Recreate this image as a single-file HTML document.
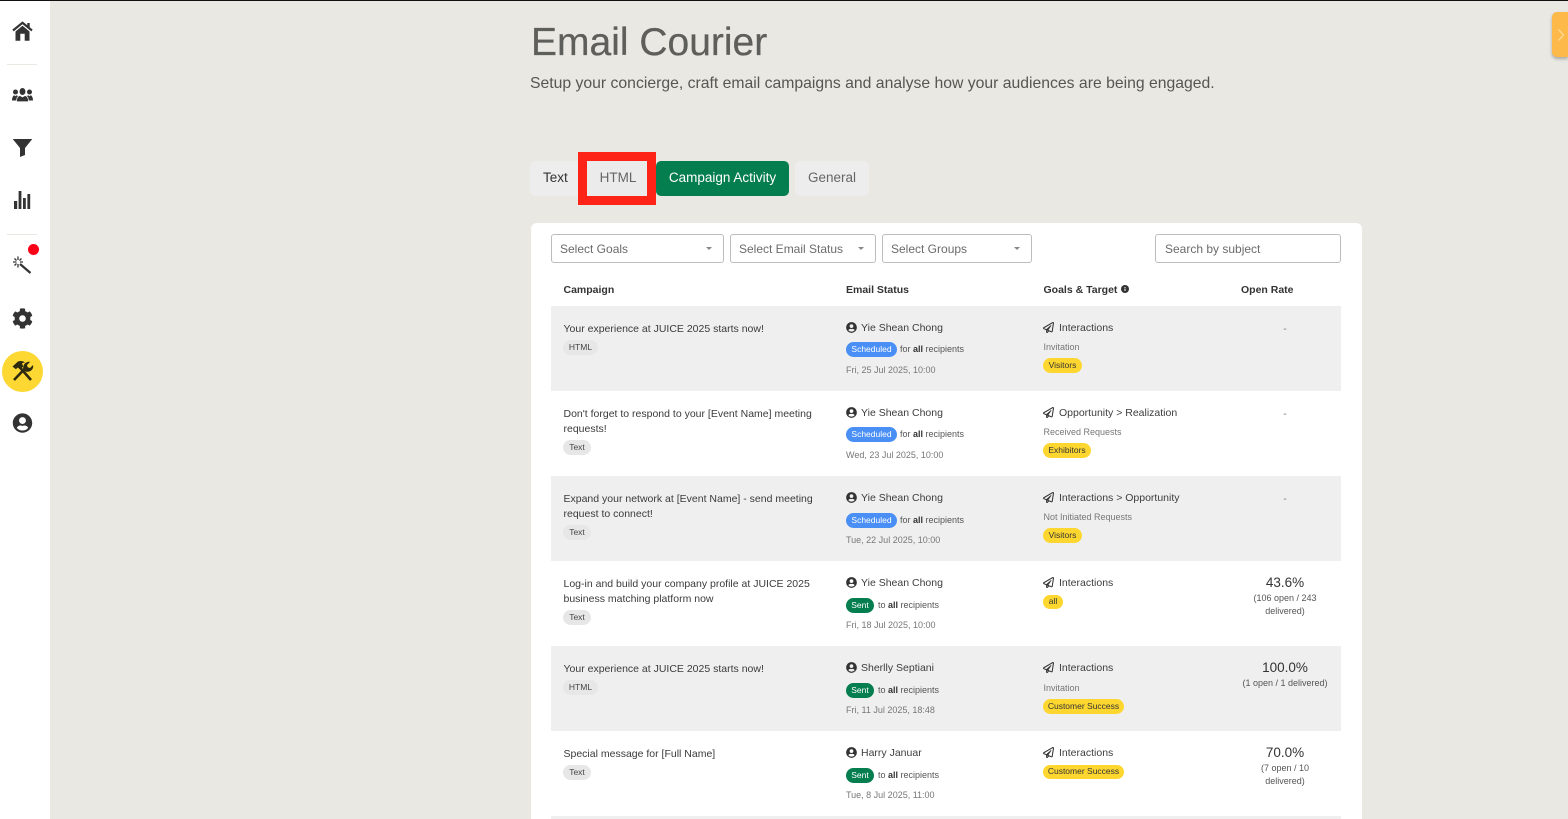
<!DOCTYPE html>
<html lang="en">
<head>
<meta charset="utf-8">
<title>Email Courier</title>
<style>
*{box-sizing:border-box}
html{margin:0;padding:0;width:1568px;height:819px;overflow:hidden}
body{margin:0;padding:0;width:1568px;height:819px;overflow:hidden;position:relative;background:#e9e8e3;font-family:"Liberation Sans",sans-serif;color:#333}
.a{position:absolute}
.t{position:absolute;white-space:nowrap;line-height:16px}
#topline{left:0;top:0;width:1568px;height:1px;background:#111;z-index:9}
#side{left:0;top:0;width:50px;height:819px;background:#fff}
.sep{position:absolute;left:7px;width:30px;height:1px;background:#e9e8e3}
.ic{position:absolute;fill:#333}
h1{position:absolute;margin:0;left:531px;top:20px;font-size:39px;line-height:45px;font-weight:400;color:#5e5e5a;-webkit-text-stroke:.25px #5e5e5a}
.subt{left:530px;top:74px;font-size:15.75px;line-height:20px;color:#565652}
.tab{position:absolute;top:161px;height:35px;line-height:33px;font-size:13.5px;text-align:center;background:#ededed;border-radius:5px;color:#666}
#card{left:531px;top:223px;width:831px;height:596px;background:#fff;border-radius:6px 6px 0 0}
.sel{position:absolute;top:234px;height:29px;background:#fff;border:1px solid #bdbdbd;border-radius:3px;font-size:12px;line-height:28px;color:#6b6b6b;padding-left:8px}
.sel i{position:absolute;right:11px;top:12px;width:0;height:0;border-left:3.5px solid transparent;border-right:3.5px solid transparent;border-top:3.5px solid #888}
.h{font-size:10.5px;font-weight:700;color:#333;top:282px}
.row{position:absolute;left:551px;width:790px;height:85px}
.g{background:#efefef}
.row .t{font-size:10.5px}
.c1{left:12.5px;color:#3b3b3b;line-height:15px!important;width:265px;white-space:normal!important}
.tag{position:absolute;left:12px;height:15px;border-radius:8px;background:#e7e7e7;font-size:8.5px;line-height:14px;text-align:center;color:#444}
.u{position:absolute;left:295px;top:16px;width:11px;height:11px;fill:#333}
.p{position:absolute;left:492px;top:16px;width:11px;height:11px;fill:#333}
.n{left:310px;top:14px;color:#3d3d3d}
.b{position:absolute;left:295px;height:15px;border-radius:8px;color:#fff;font-size:8.5px;line-height:14px;text-align:center}
.s{background:#4a8ff5;width:51px}
.d{background:#047d4f;width:28px}
.r{color:#555;font-size:9px!important}
.r b{color:#333}
.dt{left:295px;font-size:9px!important;color:#777}
.go{left:508px;top:14px;color:#3d3d3d}
.su{left:492.5px;top:33px;font-size:9px!important;color:#777}
.y{position:absolute;left:492px;height:15px;border-radius:8px;background:#fdd72f;color:#333;font-size:8.5px;line-height:14px;text-align:center}
.pc{left:664px;width:140px;text-align:center;top:14px;font-size:13.5px!important;color:#333}
.ps{position:absolute;left:694px;width:80px;text-align:center;top:31px;font-size:9px;line-height:13px;color:#555}
.ps.w{left:664px;width:140px}
.da{left:664px;width:140px;text-align:center;top:15px;color:#777}
</style>
</head>
<body>
<svg width="0" height="0" style="position:absolute">
<defs>
<symbol id="user" viewBox="0 0 512 512"><path d="M256 8C119 8 8 119 8 256s111 248 248 248 248-111 248-248S393 8 256 8zm0 96c48.6 0 88 39.4 88 88s-39.4 88-88 88-88-39.4-88-88 39.4-88 88-88zm0 344c-58.7 0-111.3-26.6-146.5-68.2 18.8-35.4 55.6-59.8 98.5-59.8 2.4 0 4.8.4 7.1 1.1 13 4.2 26.6 6.9 40.9 6.9 14.3 0 28-2.7 40.9-6.9 2.3-.7 4.7-1.1 7.1-1.1 42.9 0 79.7 24.4 98.5 59.8C367.3 421.4 314.7 448 256 448z"/></symbol>
<symbol id="plane" viewBox="0 0 512 512"><path d="M440 6.5L24 246.4c-34.4 19.9-31.1 70.8 5.7 85.9L144 379.6V464c0 46.4 59.2 65.5 86.6 28.6l43.8-59.1 111.9 46.2c5.9 2.4 12.1 3.6 18.3 3.6 8.2 0 16.3-2.1 23.6-6.2 12.8-7.2 21.6-20 23.9-34.5l59.4-387.2c6.1-40.1-36.9-68.8-71.5-48.9zM192 464v-64.6l36.6 15.1L192 464zm212.6-28.7l-153.8-63.5L391 169.5c10.7-15.5-9.5-33.5-23.7-21.2L155.8 332.6 48 288 464 48l-59.4 387.3z"/></symbol>
</defs>
</svg>

<div id="topline" class="a"></div>
<div id="side" class="a"></div>
<div class="sep" style="top:64px"></div>
<div class="sep" style="top:234px"></div>

<svg class="a" style="left:0;top:0" width="50" height="60" viewBox="0 0 50 60"><path d="M13 30.5L22.5 22.8L32 30.5" stroke="#333" stroke-width="2.2" fill="none"/><rect x="27.3" y="23" width="2.4" height="5" fill="#333"/><path d="M15.5 31.5L22.5 25.8L29.5 31.5V40.7H24.7V33.8H20.3V40.7H15.5z" fill="#333"/></svg>

<svg class="a" style="left:0;top:80px" width="50" height="30" viewBox="0 0 50 30"><circle cx="15.5" cy="12" r="2.5" fill="#333"/><circle cx="29.5" cy="12" r="2.5" fill="#333"/><path d="M12 20.5c0-3 1.2-4.8 2.3-5.2l1.2 1 1.2-1c1 .4 2.3 1.5 2.3 5.2z" fill="#333"/><path d="M33 20.5c0-3-1.2-4.8-2.3-5.2l-1.2 1-1.2-1c-1 .4-2.3 1.500-2.300 5.200z" fill="#333"/><ellipse cx="22.5" cy="11.5" rx="3.3" ry="3.9" fill="#333" stroke="#fff" stroke-width=".7"/><path d="M16.5 21.7c0-3.700 1.500-5.700 3.300-6.200l2.700 1.500 2.700-1.500c1.800.5 3.300 2.500 3.300 6.200z" fill="#333" stroke="#fff" stroke-width=".7"/></svg>

<svg class="a" style="left:0;top:130px" width="50" height="30" viewBox="0 0 50 30"><path d="M12.7 9H32.3L25 18V25L20 27V18z" fill="#333"/></svg>

<svg class="ic" style="left:14px;top:191px" width="17" height="18" viewBox="0 0 17 18"><rect x="0" y="10" width="3.2" height="8"/><rect x="4.6" y="0" width="2.8" height="18"/><rect x="9" y="7" width="2.8" height="11"/><rect x="13.4" y="3" width="2.8" height="15"/></svg>

<svg class="a" style="left:12px;top:255px" width="20" height="20" viewBox="0 0 20 20"><path d="M8 9L18.5 18" stroke="#333" stroke-width="2.2" fill="none"/><path d="M6 1.5v3.500M6 9v3.500M1 7h3.500M8 7h3M2.500 3.500l2 2M9.500 3.500l-2 2M2.500 10.500l2-2" stroke="#333" stroke-width="1.3" fill="none"/></svg>
<div class="a" style="left:28px;top:244px;width:11px;height:11px;border-radius:50%;background:#fb0017"></div>

<svg class="ic" style="left:12px;top:308px" width="21" height="21" viewBox="0 0 512 512"><path d="M487.4 315.7l-42.6-24.6c4.3-23.2 4.3-47 0-70.2l42.6-24.6c4.9-2.8 7.1-8.6 5.5-14-11.1-35.6-30-67.8-54.7-94.6-3.8-4.1-10-5.1-14.8-2.3L380.8 110c-17.9-15.4-38.5-27.3-60.8-35.1V25.8c0-5.6-3.9-10.5-9.4-11.7-36.7-8.2-74.3-7.8-109.2 0-5.5 1.2-9.4 6.1-9.4 11.7V75c-22.2 7.9-42.8 19.8-60.8 35.1L88.7 85.5c-4.9-2.8-11-1.9-14.8 2.3-24.7 26.7-43.6 58.9-54.7 94.6-1.7 5.4.6 11.2 5.5 14L67.3 221c-4.3 23.2-4.3 47 0 70.2l-42.6 24.6c-4.9 2.8-7.1 8.6-5.5 14 11.1 35.6 30 67.8 54.7 94.6 3.8 4.1 10 5.1 14.8 2.3l42.6-24.6c17.9 15.4 38.5 27.3 60.8 35.1v49.2c0 5.6 3.9 10.5 9.4 11.7 36.7 8.2 74.3 7.8 109.2 0 5.5-1.2 9.4-6.1 9.4-11.7v-49.2c22.2-7.9 42.8-19.8 60.8-35.1l42.6 24.6c4.9 2.8 11 1.9 14.8-2.3 24.7-26.7 43.6-58.9 54.7-94.6 1.5-5.5-.7-11.3-5.6-14.1zM256 336c-44.1 0-80-35.9-80-80s35.9-80 80-80 80 35.9 80 80-35.9 80-80 80z"/></svg>

<div class="a" style="left:2px;top:351px;width:41px;height:41px;border-radius:50%;background:#fdd732"></div>
<svg class="a" style="left:11px;top:360px" width="23" height="22" viewBox="0 0 23 22"><path d="M9 7.5L20 20" stroke="#2e2a10" stroke-width="2.6" fill="none"/><path d="M1.5 6.5L7 1.5c2.5-.8 5-.5 7 .8l-3 1 1.2 3.2-3 3-2.5-2-1.8 1.800z" fill="#2e2a10"/><path d="M3 20L13.5 9" stroke="#2e2a10" stroke-width="2.6" fill="none"/><path d="M12.5 9.5c-1-3 .5-6.5 4-7.5 1-.3 2-.2 2.5 0l-3 3 .7 2.3 2.3.7 3-3c.3 1 .2 2 0 2.8-1 3.2-4.5 4.7-7.5 3.7z" fill="#2e2a10"/></svg>

<svg class="ic" style="left:12px;top:413px" width="21" height="20" viewBox="0 0 512 512"><use href="#user"/></svg>

<h1>Email Courier</h1>
<div class="t subt">Setup your concierge, craft email campaigns and analyse how your audiences are being engaged.</div>

<div class="tab" style="left:530px;width:54px;color:#333;text-align:left;padding-left:13px">Text</div>
<div class="tab" style="left:578px;top:152px;width:78px;height:53px;background:#ebebeb;border:9px solid #fd2316;border-radius:0;line-height:33px;color:#666;padding-left:2px">HTML</div>
<div class="tab" style="left:656px;width:133px;background:#047d4f;color:#fff">Campaign Activity</div>
<div class="tab" style="left:795px;width:74px">General</div>

<div id="card" class="a"></div>
<div class="sel" style="left:551px;width:173px">Select Goals<i></i></div>
<div class="sel" style="left:730px;width:146px">Select Email Status<i></i></div>
<div class="sel" style="left:882px;width:150px">Select Groups<i></i></div>
<div class="sel" style="left:1155px;width:186px;padding-left:9px">Search by subject</div>

<div class="t h" style="left:563.5px">Campaign</div>
<div class="t h" style="left:846px">Email Status</div>
<div class="t h" style="left:1043.5px">Goals &amp; Target</div>
<svg class="a" style="left:1121px;top:285px" width="8" height="8" viewBox="0 0 8 8"><circle cx="4" cy="4" r="4" fill="#333"/><rect x="3.5" y="3.5" width="1" height="2.5" fill="#fff"/><rect x="3.5" y="2" width="1" height="1" fill="#fff"/></svg>
<div class="t h" style="left:1241px">Open Rate</div>

<div class="row g" style="top:306px">
<div class="t c1" style="top:15px;margin-top:0.5px">Your experience at JUICE 2025 starts now!</div>
<div class="tag" style="top:34px;width:35px">HTML</div>
<svg class="u"><use href="#user"/></svg><div class="t n">Yie Shean Chong</div>
<div class="b s" style="top:36px">Scheduled</div><div class="t r" style="left:349px;top:35px">for <b>all</b> recipients</div>
<div class="t dt" style="top:56px">Fri, 25 Jul 2025, 10:00</div>
<svg class="p"><use href="#plane"/></svg><div class="t go">Interactions</div>
<div class="t su">Invitation</div>
<div class="y" style="top:52px;width:39px">Visitors</div>
<div class="t da">-</div>
</div>

<div class="row" style="top:391px">
<div class="t c1" style="top:15px;margin-top:0.5px">Don't forget to respond to your [Event Name] meeting requests!</div>
<div class="tag" style="top:49px;width:28px">Text</div>
<svg class="u"><use href="#user"/></svg><div class="t n">Yie Shean Chong</div>
<div class="b s" style="top:36px">Scheduled</div><div class="t r" style="left:349px;top:35px">for <b>all</b> recipients</div>
<div class="t dt" style="top:56px">Wed, 23 Jul 2025, 10:00</div>
<svg class="p"><use href="#plane"/></svg><div class="t go">Opportunity &gt; Realization</div>
<div class="t su">Received Requests</div>
<div class="y" style="top:52px;width:48px">Exhibitors</div>
<div class="t da">-</div>
</div>

<div class="row g" style="top:476px">
<div class="t c1" style="top:15px;margin-top:0.5px">Expand your network at [Event Name] - send meeting request to connect!</div>
<div class="tag" style="top:49px;width:28px">Text</div>
<svg class="u"><use href="#user"/></svg><div class="t n">Yie Shean Chong</div>
<div class="b s" style="top:37px">Scheduled</div><div class="t r" style="left:349px;top:36px">for <b>all</b> recipients</div>
<div class="t dt" style="top:56px">Tue, 22 Jul 2025, 10:00</div>
<svg class="p"><use href="#plane"/></svg><div class="t go">Interactions &gt; Opportunity</div>
<div class="t su">Not Initiated Requests</div>
<div class="y" style="top:52px;width:39px">Visitors</div>
<div class="t da">-</div>
</div>

<div class="row" style="top:561px">
<div class="t c1" style="top:15px;margin-top:0.5px">Log-in and build your company profile at JUICE 2025 business matching platform now</div>
<div class="tag" style="top:49px;width:28px">Text</div>
<svg class="u"><use href="#user"/></svg><div class="t n">Yie Shean Chong</div>
<div class="b d" style="top:37px">Sent</div><div class="t r" style="left:327px;top:36px">to <b>all</b> recipients</div>
<div class="t dt" style="top:56px">Fri, 18 Jul 2025, 10:00</div>
<svg class="p"><use href="#plane"/></svg><div class="t go">Interactions</div>
<div class="y" style="top:34px;width:20px;height:14px;line-height:13px">all</div>
<div class="t pc">43.6%</div>
<div class="ps">(106 open / 243 delivered)</div>
</div>

<div class="row g" style="top:646px">
<div class="t c1" style="top:15px;margin-top:0.5px">Your experience at JUICE 2025 starts now!</div>
<div class="tag" style="top:34px;width:35px">HTML</div>
<svg class="u"><use href="#user"/></svg><div class="t n">Sherlly Septiani</div>
<div class="b d" style="top:37px">Sent</div><div class="t r" style="left:327px;top:36px">to <b>all</b> recipients</div>
<div class="t dt" style="top:56px">Fri, 11 Jul 2025, 18:48</div>
<svg class="p"><use href="#plane"/></svg><div class="t go">Interactions</div>
<div class="t su" style="top:34px">Invitation</div>
<div class="y" style="top:53px;width:81px">Customer Success</div>
<div class="t pc">100.0%</div>
<div class="ps w">(1 open / 1 delivered)</div>
</div>

<div class="row" style="top:731px">
<div class="t c1" style="top:15px;margin-top:0.5px">Special message for [Full Name]</div>
<div class="tag" style="top:34px;width:28px">Text</div>
<svg class="u"><use href="#user"/></svg><div class="t n">Harry Januar</div>
<div class="b d" style="top:37px">Sent</div><div class="t r" style="left:327px;top:36px">to <b>all</b> recipients</div>
<div class="t dt" style="top:56px">Tue, 8 Jul 2025, 11:00</div>
<svg class="p"><use href="#plane"/></svg><div class="t go">Interactions</div>
<div class="y" style="top:34px;width:81px;height:14px;line-height:13px">Customer Success</div>
<div class="t pc">70.0%</div>
<div class="ps">(7 open / 10 delivered)</div>
</div>

<div class="row g" style="top:816px;height:3px"></div>

<div class="a" style="left:1552px;top:12px;width:16px;height:45px;background:#fdb94a;border-radius:5px 0 0 5px;box-shadow:0 2px 3px rgba(0,0,0,.28)"></div>
<svg class="a" style="left:1557px;top:28px" width="9" height="14" viewBox="0 0 9 14"><path d="M1.5 1.5L6.5 7l-5 5.5" stroke="#ffdc96" stroke-width="1.3" fill="none"/></svg>
</body>
</html>
